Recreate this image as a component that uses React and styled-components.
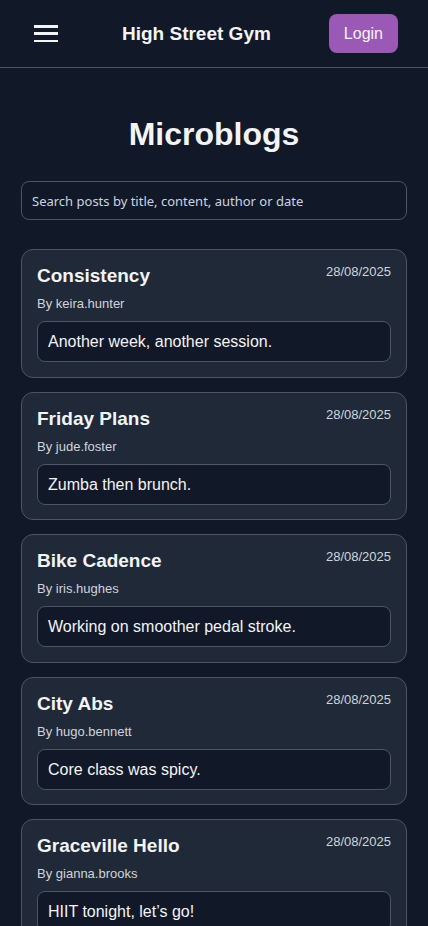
import styled, { createGlobalStyle } from 'styled-components';

const posts = [
  { title: 'Consistency', author: 'keira.hunter', date: '28/08/2025', body: 'Another week, another session.' },
  { title: 'Friday Plans', author: 'jude.foster', date: '28/08/2025', body: 'Zumba then brunch.' },
  { title: 'Bike Cadence', author: 'iris.hughes', date: '28/08/2025', body: 'Working on smoother pedal stroke.' },
  { title: 'City Abs', author: 'hugo.bennett', date: '28/08/2025', body: 'Core class was spicy.' },
  { title: 'Graceville Hello', author: 'gianna.brooks', date: '28/08/2025', body: 'HIIT tonight, let’s go!' },
];

const GlobalStyle = createGlobalStyle`
  html, body {
    margin: 0;
    background: #111827;
    font-family: "Liberation Sans", Arial, sans-serif;
    color: #f3f4f6;
  }
  * { box-sizing: border-box; }
`;

const Page = styled.div`
  min-height: 926px;
  background: #111827;
`;

const Header = styled.header`
  height: 68px;
  display: flex;
  align-items: center;
  justify-content: space-between;
  padding: 0 30px 0 34px;
  border-bottom: 1px solid #4b5563;
`;

const MenuButton = styled.button`
  width: 24px;
  height: 17px;
  padding: 0;
  border: none;
  background: none;
  display: flex;
  flex-direction: column;
  justify-content: space-between;
  cursor: pointer;
`;

const Bar = styled.span`
  display: block;
  height: 2.5px;
  width: 100%;
  background: #f3f4f6;
`;

const Brand = styled.div`
  font-size: 19px;
  font-weight: bold;
  color: #f3f4f6;
  margin-left: 6px;
`;

const LoginButton = styled.button`
  height: 39px;
  padding: 0 15px;
  border: none;
  border-radius: 8px;
  background: #9b59b6;
  color: #f3f4f6;
  font-family: "Liberation Sans", Arial, sans-serif;
  font-size: 16px;
  cursor: pointer;
`;

const Main = styled.main`
  padding: 46px 21px 20px;
`;

const Heading = styled.h1`
  margin: 0 0 27px;
  text-align: center;
  font-size: 32px;
  line-height: 40px;
  font-weight: bold;
  color: #f3f4f6;
`;

const Search = styled.input`
  display: block;
  width: 100%;
  height: 39px;
  padding: 0 10px;
  background: #111827;
  border: 1px solid #4b5563;
  border-radius: 8px;
  color: #e5e7eb;
  font-family: "Noto Sans", sans-serif;
  font-size: 13px;
  outline: none;

  &::placeholder {
    color: #cbd5e1;
  }
`;

const List = styled.div`
  margin-top: 29px;
  display: flex;
  flex-direction: column;
  gap: 14px;
`;

const Card = styled.article`
  background: #1f2937;
  border: 1px solid #4b5563;
  border-radius: 12px;
  padding: 15px 15px 14.6px;
`;

const CardTop = styled.div`
  display: flex;
  justify-content: space-between;
  align-items: flex-start;
`;

const Title = styled.h2`
  margin: 0;
  font-size: 19px;
  line-height: 21px;
  font-weight: bold;
  color: #f3f4f6;
`;

const DateText = styled.span`
  font-size: 13px;
  line-height: 13px;
  color: #d1d5db;
`;

const Author = styled.div`
  margin-top: 9px;
  font-size: 13px;
  line-height: 18px;
  color: #d1d5db;
`;

const Body = styled.div`
  margin-top: 8px;
  padding: 10px 10px;
  background: #111827;
  border: 1px solid #4b5563;
  border-radius: 8px;
  font-size: 16px;
  line-height: 19px;
  color: #f3f4f6;
`;

export default function App() {
  return (
    <Page>
      <GlobalStyle />
      <Header>
        <MenuButton aria-label="Menu">
          <Bar />
          <Bar />
          <Bar />
        </MenuButton>
        <Brand>High Street Gym</Brand>
        <LoginButton>Login</LoginButton>
      </Header>
      <Main>
        <Heading>Microblogs</Heading>
        <Search placeholder="Search posts by title, content, author or date" />
        <List>
          {posts.map((p) => (
            <Card key={p.title}>
              <CardTop>
                <Title>{p.title}</Title>
                <DateText>{p.date}</DateText>
              </CardTop>
              <Author>By {p.author}</Author>
              <Body>{p.body}</Body>
            </Card>
          ))}
        </List>
      </Main>
    </Page>
  );
}
